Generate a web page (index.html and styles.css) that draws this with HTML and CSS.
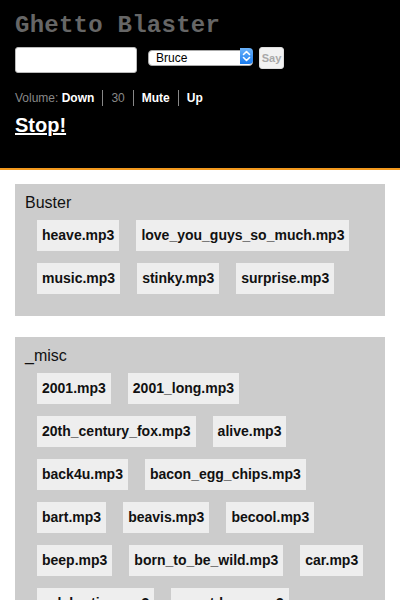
FILE: index.html
```html
<!DOCTYPE html>
<html>
<head>
<meta charset="utf-8">
<title>Ghetto Blaster</title>
<link rel="stylesheet" href="styles.css">
</head>
<body>
<header class="top">
  <h1 class="title">Ghetto Blaster</h1>
  <div class="controls">
    <input class="say-text" type="text">
    <span class="voice">
      <select class="voice-select"><option>Bruce</option></select>
      <span class="voice-arrow">
        <svg width="13" height="16" viewBox="0 0 13 16"><path d="M3.5 6.5 L6.5 3.5 L9.5 6.5 M3.5 9.5 L6.5 12.5 L9.5 9.5" fill="none" stroke="#fff" stroke-width="1.6" stroke-linecap="round" stroke-linejoin="round"/></svg>
      </span>
    </span>
    <button class="say-btn">Say</button>
  </div>
  <div class="volume">
    <span class="vol-label">Volume: <a class="vol-link">Down</a></span>
    <span class="vol-item vol-num">30</span>
    <span class="vol-item"><a class="vol-link">Mute</a></span>
    <span class="vol-item"><a class="vol-link">Up</a></span>
  </div>
  <a class="stop">Stop!</a>
</header>
<main class="main">
  <section class="panel">
    <h2 class="panel-title">Buster</h2>
    <div class="sounds">
      <span class="sound">heave.mp3</span>
      <span class="sound">love_you_guys_so_much.mp3</span>
      <span class="sound">music.mp3</span>
      <span class="sound">stinky.mp3</span>
      <span class="sound">surprise.mp3</span>
    </div>
  </section>
  <section class="panel">
    <h2 class="panel-title">_misc</h2>
    <div class="sounds">
      <span class="sound">2001.mp3</span>
      <span class="sound">2001_long.mp3</span>
      <span class="sound">20th_century_fox.mp3</span>
      <span class="sound">alive.mp3</span>
      <span class="sound">back4u.mp3</span>
      <span class="sound">bacon_egg_chips.mp3</span>
      <span class="sound">bart.mp3</span>
      <span class="sound">beavis.mp3</span>
      <span class="sound">becool.mp3</span>
      <span class="sound">beep.mp3</span>
      <span class="sound">born_to_be_wild.mp3</span>
      <span class="sound">car.mp3</span>
      <span class="sound">celebration.mp3</span>
      <span class="sound">countdown.mp3</span>
    </div>
  </section>
</main>
</body>
</html>
```
FILE: styles.css
```css
html, body {
  margin: 0;
  padding: 0;
  background: #fff;
  font-family: "Liberation Sans", Arial, sans-serif;
}

.top {
  background: #000;
  border-bottom: 2px solid #f39a1e;
  padding: 12px 15px 31px;
}

.title {
  margin: 0;
  font-family: "Liberation Mono", "Courier New", monospace;
  font-weight: bold;
  font-size: 24px;
  line-height: 28px;
  letter-spacing: 0.25px;
  color: #666;
}

.controls {
  display: flex;
  align-items: flex-start;
  margin-top: 7px;
}

.say-text {
  box-sizing: border-box;
  width: 122px;
  height: 26px;
  margin: 0;
  border: 1px solid #bbb;
  border-radius: 3px;
  background: #fff;
  padding: 2px 4px;
}

.voice {
  position: relative;
  display: inline-block;
  margin-left: 11px;
  margin-top: 1px;
  width: 105px;
  height: 16px;
}

.voice-select {
  -webkit-appearance: none;
  appearance: none;
  box-sizing: border-box;
  width: 105px;
  height: 16px;
  margin: 0;
  padding: 0 0 0 7px;
  border: 1px solid #aaa;
  border-radius: 4px;
  background: #fff;
  font-family: "Liberation Sans", Arial, sans-serif;
  font-size: 12px;
  line-height: 14px;
  color: #000;
}

.voice-arrow {
  position: absolute;
  right: 0;
  top: 0;
  width: 13px;
  height: 16px;
  border-radius: 0 4px 4px 0;
  background: linear-gradient(#6cb3fa, #1a7cf0);
  display: flex;
  align-items: center;
  justify-content: center;
}

.voice-arrow svg {
  display: block;
}

.say-btn {
  box-sizing: border-box;
  width: 25px;
  height: 22px;
  margin: 0 0 0 6px;
  padding: 0;
  border: 1px solid #ddd;
  border-radius: 3px;
  background: #f2f2f2;
  color: #a8a8a8;
  font-family: "Liberation Sans", Arial, sans-serif;
  font-weight: bold;
  font-size: 11px;
}

.volume {
  display: flex;
  align-items: center;
  margin-top: 17px;
  font-size: 12px;
  line-height: 16px;
  color: #888;
}

.vol-label {
  padding-right: 8px;
}

.vol-link {
  color: #fff;
  font-weight: bold;
}

.vol-item {
  border-left: 1px solid #888;
  padding: 0 8px;
}

.vol-num {
  color: #888;
}

.stop {
  display: inline-block;
  margin-top: 8px;
  font-size: 20px;
  line-height: 23px;
  font-weight: bold;
  color: #fff;
  text-decoration: underline;
}

.main {
  padding: 14px 15px 0;
}

.panel {
  background: #ccc;
  padding: 10px 10px 10px;
  margin-bottom: 21px;
}

.panel-title {
  margin: 0 0 8px;
  font-weight: normal;
  font-size: 16px;
  line-height: 18px;
  color: #111;
}

.sounds {
  display: flex;
  flex-wrap: wrap;
  gap: 12px 17px;
  padding: 0 0 12px 12px;
}

.sound {
  background: #eee;
  padding: 7px 5px;
  font-size: 14px;
  line-height: 17px;
  font-weight: bold;
  color: #111;
}
```
